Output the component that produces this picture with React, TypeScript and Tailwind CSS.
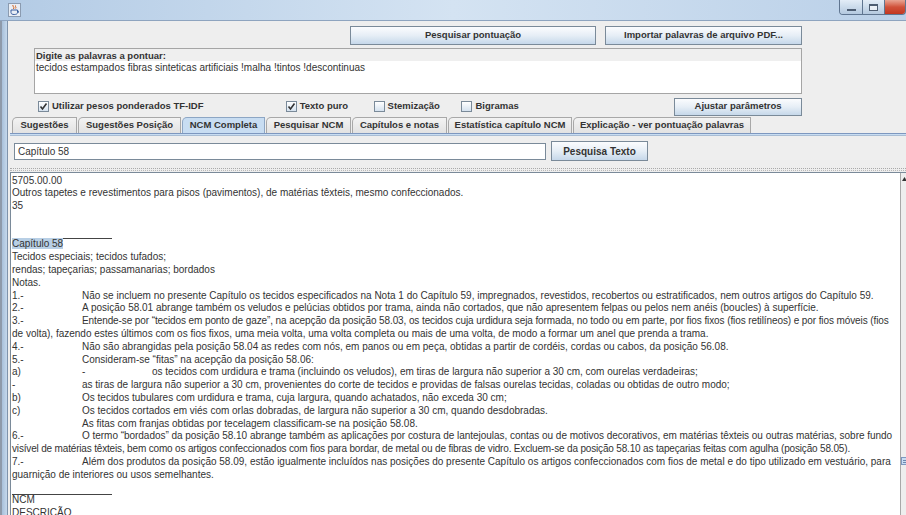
import React from 'react';

type Row = string | string[] | { t: string[]; tr: string };

const TEXT: Row[] = [
  '5705.00.00',
  'Outros tapetes e revestimentos para pisos (pavimentos), de matérias têxteis, mesmo confeccionados.',
  '35',
  '',
  '',
  'HR',
  'SEL',
  'Tecidos especiais; tecidos tufados;',
  'rendas; tapeçarias; passamanarias; bordados',
  'Notas.',
  ['1.-', 'Não se incluem no presente Capítulo os tecidos especificados na Nota 1 do Capítulo 59, impregnados, revestidos, recobertos ou estratificados, nem outros artigos do Capítulo 59.'],
  ['2.-', 'A posição 58.01 abrange também os veludos e pelúcias obtidos por trama, ainda não cortados, que não apresentem felpas ou pelos nem anéis (boucles) à superfície.'],
  {
    t: ['3.-', 'Entende-se por “tecidos em ponto de gaze”, na acepção da posição 58.03, os tecidos cuja urdidura seja formada, no todo ou em parte, por fios fixos (fios retilíneos) e por fios móveis (fios'],
    tr: 'tracking-[-0.1px]',
  },
  'de volta), fazendo estes últimos com os fios fixos, uma meia volta, uma volta completa ou mais de uma volta, de modo a formar um anel que prenda a trama.',
  ['4.-', 'Não são abrangidas pela posição 58.04 as redes com nós, em panos ou em peça, obtidas a partir de cordéis, cordas ou cabos, da posição 56.08.'],
  ['5.-', 'Consideram-se “fitas” na acepção da posição 58.06:'],
  ['a)', '-', 'os tecidos com urdidura e trama (incluindo os veludos), em tiras de largura não superior a 30 cm, com ourelas verdadeiras;'],
  ['-', 'as tiras de largura não superior a 30 cm, provenientes do corte de tecidos e providas de falsas ourelas tecidas, coladas ou obtidas de outro modo;'],
  ['b)', 'Os tecidos tubulares com urdidura e trama, cuja largura, quando achatados, não exceda 30 cm;'],
  ['c)', 'Os tecidos cortados em viés com orlas dobradas, de largura não superior a 30 cm, quando desdobradas.'],
  ['', 'As fitas com franjas obtidas por tecelagem classificam-se na posição 58.08.'],
  {
    t: ['6.-', 'O termo “bordados” da posição 58.10 abrange também as aplicações por costura de lantejoulas, contas ou de motivos decorativos, em matérias têxteis ou outras matérias, sobre fundo'],
    tr: 'tracking-[-0.03px]',
  },
  {
    t: ['visível de matérias têxteis, bem como os artigos confeccionados com fios para bordar, de metal ou de fibras de vidro. Excluem-se da posição 58.10 as tapeçarias feitas com agulha (posição 58.05).'],
    tr: 'tracking-[-0.17px]',
  },
  ['7.-', 'Além dos produtos da posição 58.09, estão igualmente incluídos nas posições do presente Capítulo os artigos confeccionados com fios de metal e do tipo utilizado em vestuário, para'],
  'guarnição de interiores ou usos semelhantes.',
  '',
  'HR',
  'NCM',
  'DESCRIÇÃO',
];

const TABS = [
  { label: 'Sugestões', w: 'w-[65px]' },
  { label: 'Sugestões Posição', w: 'w-[103px]' },
  { label: 'NCM Completa', w: 'w-[83px]', on: true },
  { label: 'Pesquisar NCM', w: 'w-[85px]' },
  { label: 'Capítulos e notas', w: 'w-[95px]' },
  { label: 'Estatística capítulo NCM', w: 'w-[124px]' },
  { label: 'Explicação - ver pontuação palavras', w: 'w-[178px]' },
];

function Btn({ children, className = '' }: { children: React.ReactNode; className?: string }) {
  return (
    <div
      className={`flex items-center justify-center border border-[#7a8a99] bg-gradient-to-b from-[#fbfcfe] via-[#e6eef6] to-[#c6d8ea] text-[9.5px] font-bold text-[#333] ${className}`}
    >
      {children}
    </div>
  );
}

function Check({ on }: { on?: boolean }) {
  return (
    <span className="w-[11px] h-[11px] border border-[#7a8a99] bg-gradient-to-b from-white to-[#d5e2ef] flex items-center justify-center shrink-0">
      {on && (
        <svg width="9" height="9" viewBox="0 0 9 9">
          <path d="M1.5 4.5 L3.5 7 L7.5 1.5" stroke="#333" strokeWidth="1.6" fill="none" />
        </svg>
      )}
    </span>
  );
}

function Option({ on, label, className }: { on?: boolean; label: string; className: string }) {
  return (
    <div className={`flex items-center gap-[3px] text-[9.5px] font-bold text-[#333] ${className}`}>
      <Check on={on} />
      <span>{label}</span>
    </div>
  );
}

function TextLine({ line }: { line: Row }) {
  if (line === 'HR') {
    return <div className="w-[100px] h-px -mb-px bg-[#444]" />;
  }
  if (line === 'SEL') {
    return (
      <div className="h-[12.8px] leading-[12.8px]">
        <span className="bg-[#b8cfe5]">Capítulo 58</span>
      </div>
    );
  }
  if (typeof line === 'string') {
    return <div className="h-[12.8px] leading-[12.8px] whitespace-pre">{line || ' '}</div>;
  }
  const cols = Array.isArray(line) ? line : line.t;
  const tr = Array.isArray(line) ? '' : line.tr;
  const last = cols.length - 1;
  return (
    <div className={`h-[12.8px] leading-[12.8px] whitespace-pre flex ${tr}`}>
      {cols.map((c, i) => (
        <span key={i} className={i < last ? 'w-[70px] shrink-0' : ''}>
          {c}
        </span>
      ))}
    </div>
  );
}

function JavaIcon() {
  return (
    <svg width="13" height="14" viewBox="0 0 13 14">
      <rect x="0.5" y="0.5" width="12" height="13" fill="#e9eef5" stroke="#8b9bb0" />
      <path d="M5 2 C4 3.5 7 4 5.5 6 M7.5 2.5 C6.8 3.5 8.6 4 7.6 5.5" stroke="#d2611b" strokeWidth="1" fill="none" />
      <path d="M3 7 H9.5 V9.5 C9.5 11 8 11.5 6.2 11.5 C4.4 11.5 3 11 3 9.5 Z" fill="none" stroke="#3a5f9e" strokeWidth="1" />
      <path d="M9.5 8 H10.5 V9.5 H9.5" fill="none" stroke="#3a5f9e" strokeWidth="0.8" />
    </svg>
  );
}

export default function App() {
  return (
    <div className="w-[906px] h-[515px] overflow-hidden flex flex-col bg-[#bcd3eb] font-['Liberation_Sans',Arial,sans-serif] text-[#333]">
      {/* title bar */}
      <div className="h-[21px] shrink-0 flex items-start bg-gradient-to-r from-[#b3cbe5] via-[#d4e3f2] to-[#bad0e8] border-b border-[#8ea4bf]">
        <div className="ml-[8px] mt-[3px]">
          <JavaIcon />
        </div>
        <div className="ml-auto flex h-[15px] border border-t-0 border-[#5f7590] rounded-b-[4px] overflow-hidden">
          <div className="w-[23px] flex items-end justify-center pb-[3px] bg-gradient-to-b from-[#e3edf7] to-[#b4c9df] border-r border-[#5f7590]">
            <div className="w-[9px] h-[2px] bg-white border border-[#4d5d72]" />
          </div>
          <div className="w-[22px] flex items-center justify-center bg-gradient-to-b from-[#e3edf7] to-[#b4c9df] border-r border-[#5f7590]">
            <div className="w-[9px] h-[7px] border border-[#4d5d72] border-t-2 bg-white/60" />
          </div>
          <div className="w-[20px] bg-gradient-to-b from-[#e8a493] via-[#d0513a] to-[#c2361f]" />
        </div>
      </div>

      <div className="flex-1 flex min-h-0">
        {/* left frame */}
        <div className="w-[8px] shrink-0 border-l-2 border-[#8e9aaa] bg-gradient-to-r from-[#a8c0da] to-[#c5d8ec] border-r border-r-[#7f93ab]" />

        {/* content */}
        <div className="flex-1 min-w-0 flex flex-col bg-[#eeeeee]">
          <div className="ml-[26px] w-[768px] pt-[5px]">
            <div className="flex justify-end gap-[9px]">
              <Btn className="w-[246px] h-[19px]">Pesquisar pontuação</Btn>
              <Btn className="w-[197px] h-[19px]">Importar palavras de arquivo PDF...</Btn>
            </div>
            <div className="mt-[3px] h-[46px] border border-[#a5a5a5] bg-white flex flex-col">
              <div className="h-[12px] bg-[#efefef] pl-[1px] text-[9.5px] font-bold leading-[14px] text-[#333]">
                Digite as palavras a pontuar:
              </div>
              <div className="pl-[1px] text-[10px] leading-[13px] text-[#333]">
                tecidos estampados fibras sinteticas artificiais !malha !tintos !descontinuas
              </div>
            </div>
            <div className="mt-[3px] h-[19px] flex items-center">
              <Option on label="Utilizar pesos ponderados TF-IDF" className="w-[252px] pl-[4px]" />
              <Option on label="Texto puro" className="w-[88px]" />
              <Option label="Stemização" className="w-[88px]" />
              <Option label="Bigramas" className="w-[213px]" />
              <Btn className="w-[128px] h-[18px]">Ajustar parâmetros</Btn>
            </div>
          </div>

          {/* tabs */}
          <div className="mt-[1px] ml-[4px] flex gap-[1px] h-[16px] items-end">
            {TABS.map((t) => (
              <div
                key={t.label}
                className={`${t.w} h-[16px] shrink-0 flex items-center justify-center rounded-tl-[5px] border border-b-0 text-[9.5px] font-bold text-[#333] ${
                  t.on ? 'bg-[#c8ddf2] border-[#8da6c4]' : 'bg-gradient-to-b from-[#f3f3f3] to-[#e2e2e2] border-[#a8a8a8]'
                }`}
              >
                {t.label}
              </div>
            ))}
          </div>
          <div className="ml-[2px] h-[3px] border-t border-[#7d97bf] bg-[#c8ddf2] border-b border-b-[#a9bdd4]" />

          {/* search row */}
          <div className="mt-[5px] ml-[6px] flex items-center h-[20px]">
            <div className="w-[532px] h-[17px] border border-[#7a8a99] bg-white pl-[3px] text-[10px] leading-[15px] text-[#333]">
              Capítulo 58
            </div>
            <Btn className="ml-[5px] w-[97px] h-[20px] border-[#6a87b5] text-[10px]">Pesquisa Texto</Btn>
          </div>

          {/* split divider */}
          <div className="mt-[6px] ml-[2px] h-[5px] flex flex-col justify-center gap-[1px]">
            <div className="border-t border-dotted border-[#a9a9a9]" />
            <div className="border-t border-dotted border-[#b9b9b9]" />
          </div>

          {/* text area */}
          <div className="flex-1 min-h-0 ml-[2px] flex border-t border-l border-[#7a8a99]">
            <div className="flex-1 min-w-0 overflow-hidden bg-white pl-[1px] pt-[1.5px] text-[10px] text-[#333]">
              {TEXT.map((l, i) => (
                <TextLine key={i} line={l} />
              ))}
            </div>
            <div className="w-[6px] shrink-0 border-l border-[#a8a8a8] bg-[#eeeeee] relative">
              <svg className="absolute left-[1px] top-[4px]" width="5" height="4" viewBox="0 0 5 4">
                <path d="M0 4 L2.5 0 L5 4 Z" fill="#333" />
              </svg>
              <div className="absolute left-0 top-[284px] w-[5px] h-[8px] border-l border-t border-b border-[#7d97bf] bg-[#c8ddf2] flex flex-col justify-center gap-[1px] pl-[1px]">
                <div className="h-px bg-[#6c86ad]" />
                <div className="h-px bg-[#6c86ad]" />
              </div>
            </div>
          </div>
        </div>
      </div>
    </div>
  );
}
